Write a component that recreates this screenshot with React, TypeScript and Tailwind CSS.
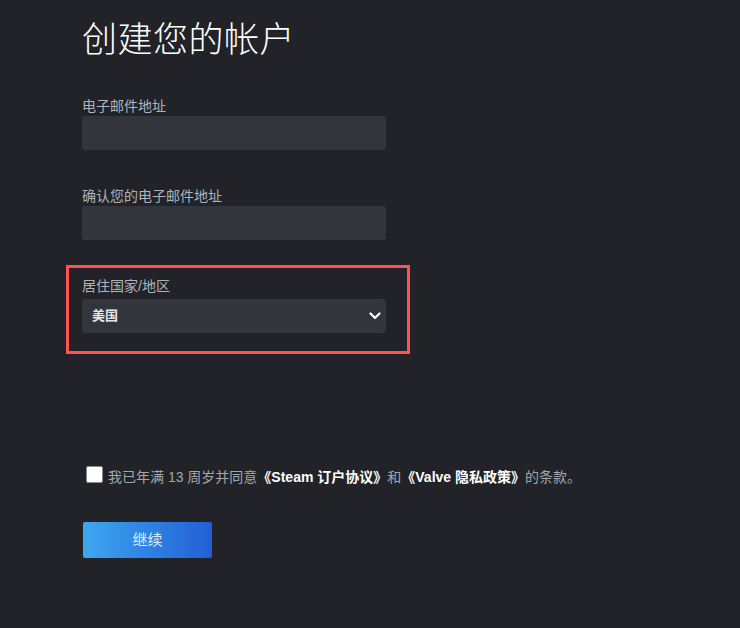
import React from 'react';

const font = { fontFamily: '"Liberation Sans", Arial, "Noto Sans CJK SC", sans-serif' };

function Field({ label }: { label: string }) {
  return (
    <div className="flex flex-col">
      <label className="text-[14px] leading-[20px] text-[#b0b4b9]">{label}</label>
      <input className="h-[34px] w-[304px] rounded-[3px] bg-[#32353c] px-[10px] text-[13px] text-white outline-none" />
    </div>
  );
}

export default function App() {
  return (
    <div style={font} className="min-h-screen w-full bg-[#212329] pl-[82px] pt-[20px]">
      {/* Title */}
      <h1 className="text-[35px] leading-[40px] font-extralight text-white tracking-[0.5px]">创建您的帐户</h1>

      <div className="mt-[36px] flex flex-col gap-[36px]">
        <Field label="电子邮件地址" />
        <Field label="确认您的电子邮件地址" />
      </div>

      {/* Highlighted country select */}
      <div className="-ml-[16px] mt-[25px] w-[344px] border-[3px] border-[#ff5252] pl-[13px] pt-[8px] pb-[18px]">
        <label className="block text-[14px] leading-[20px] text-[#b0b4b9]">居住国家/地区</label>
        <div className="mt-[3px] flex h-[34px] w-[304px] items-center justify-between rounded-[3px] bg-[#32353c] pl-[10px] pr-[4px]">
          <span className="text-[13px] font-semibold text-[#e6e6e6]">美国</span>
          <svg width="12" height="8" viewBox="0 0 12 8" className="mr-[1px]">
            <path d="M1.5 1.5 L6 6 L10.5 1.5" fill="none" stroke="#ffffff" strokeWidth="2.2" strokeLinecap="round" strokeLinejoin="round" />
          </svg>
        </div>
      </div>

      {/* Agreement */}
      <div className="mt-[113px] flex items-center pl-[4px]">
        <span className="-mt-[6px] h-[17px] w-[17px] shrink-0 rounded-[2px] border border-[#8a8a8a] bg-white"></span>
        <p className="ml-[5px] text-[14px] leading-[20px] text-[#a3a7ac]">
          我已年满 13 周岁并同意
          <span className="font-semibold text-white">《Steam 订户协议》</span>和
          <span className="font-semibold text-white">《Valve 隐私政策》</span>的条款。
        </p>
      </div>

      <button className="ml-[1px] mt-[35px] flex h-[36px] w-[129px] items-center justify-center rounded-[2px] bg-gradient-to-r from-[#40a6ef] to-[#245ed6] text-[15px] text-[#dcecfc]">
        继续
      </button>
    </div>
  );
}
